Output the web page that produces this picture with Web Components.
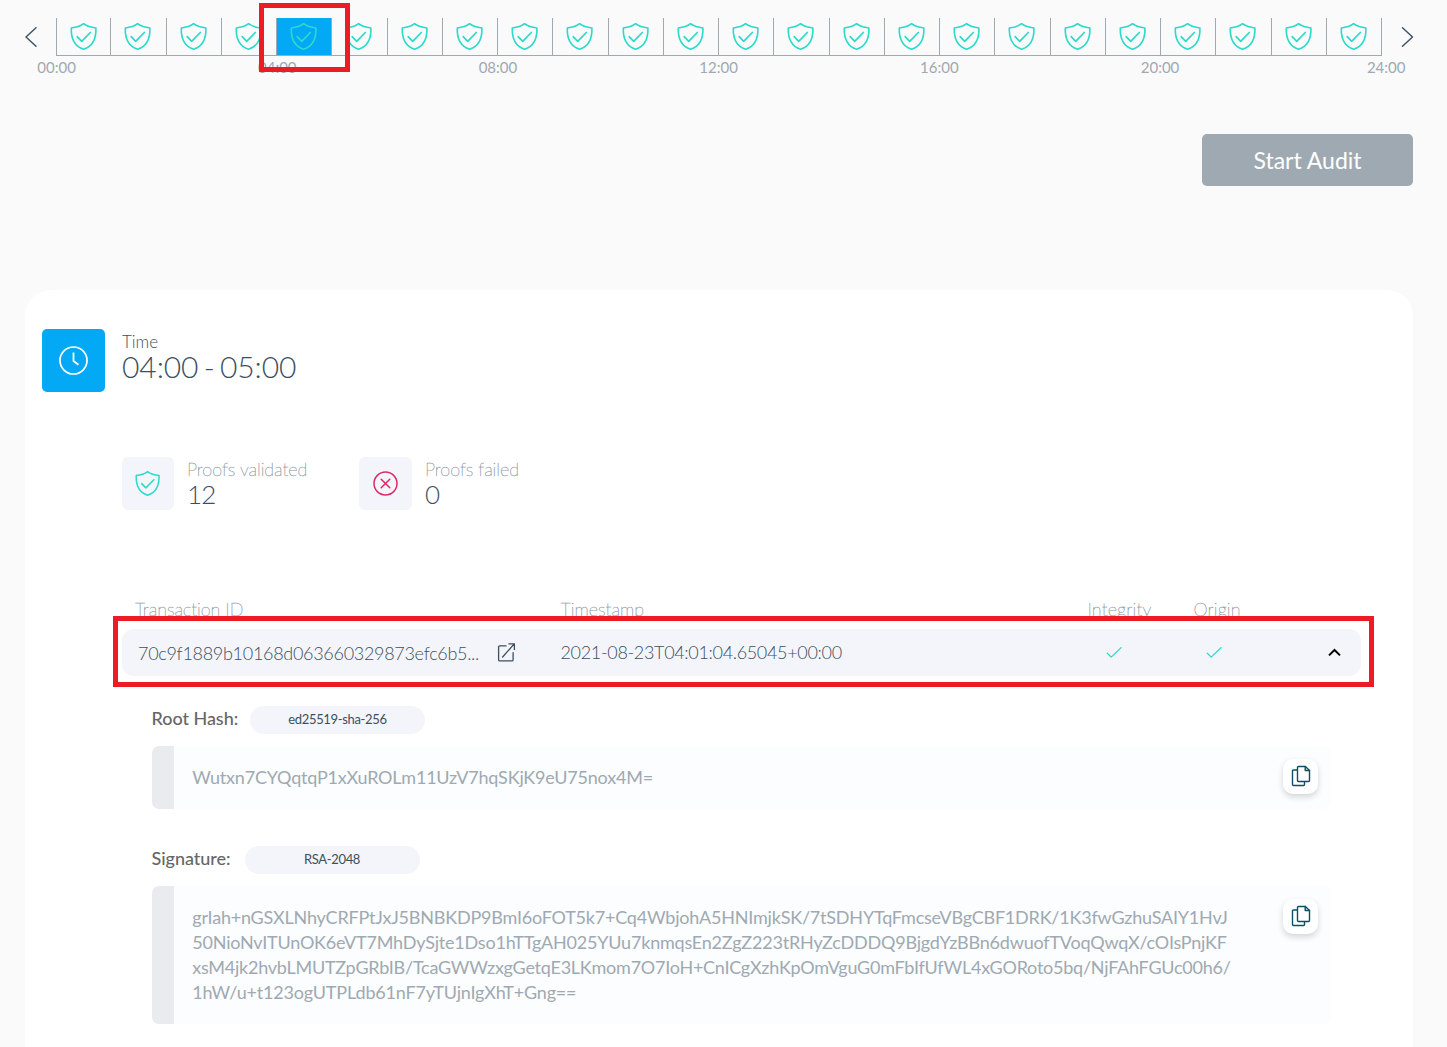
<!DOCTYPE html>
<html lang="en">
<head>
<meta charset="utf-8">
<title>Audit</title>
<style>
html,body{margin:0;height:100%;overflow:hidden}
body{background:#fafafa;font-family:Lato,"Liberation Sans",sans-serif;color:#3c4f5f}
</style>
</head>
<body>
<audit-page></audit-page>
<script>
const define=(name,html,setup)=>customElements.define(name,class extends HTMLElement{
  constructor(){super();this.attachShadow({mode:'open'});}
  connectedCallback(){
    const t=document.createElement('template');
    t.innerHTML=typeof html==='function'?html(this):html;
    this.shadowRoot.replaceChildren(t.content.cloneNode(true));
    if(setup)setup(this);
  }
});

const icons={
  shield:['0.4 -0.5 28 28','<path d="M14 1.2C10.6 3.8 6.4 5 1.7 5.5C1.3 15.5 4.8 23.8 14 26.7C23.2 23.8 26.7 15.5 26.3 5.5C21.6 5 17.4 3.8 14 1.2Z" stroke-width="1.6"/><path d="M7.6 14.2L12.1 18.8L20.7 10" stroke-width="1.7"/>'],
  clock:['-0.5 -0.5 30 30','<circle cx="15" cy="15" r="13.5" stroke-width="1.7"/><path d="M15 7V15.6L20 19.2" stroke-width="1.8" stroke-linecap="butt" stroke-linejoin="miter"/>'],
  fail:['0.5 -0.5 26 26','<circle cx="13" cy="13" r="11.5" stroke-width="1.5"/><path d="M8.7 8.7L17.3 17.3M17.3 8.7L8.7 17.3" stroke-width="1.5"/>'],
  prev:['0 0 14 22','<path d="M12 1.7L2 11L12 20.3" stroke-width="1.5"/>'],
  next:['0.5 0 14 22','<path d="M2 1.7L12 11L2 20.3" stroke-width="1.5"/>'],
  check:['-0.3 -0.6 16 12','<path d="M1 6.6L4.9 10.5L14.8 1" stroke-width="1.3"/>'],
  up:['0.5 0 14 9','<path d="M1.5 7.4L7 2L12.5 7.4" stroke-width="2" stroke-linecap="butt" stroke-linejoin="miter"/>'],
  link:['0.4 -0.4 18 20','<path d="M8.5 3.5H2.2Q1 3.5 1 4.7V17.3Q1 18.5 2.2 18.5H14.3Q15.5 18.5 15.5 17.3V10.2M5 14.6L16.6 1.5M11.3 1.4H16.8V7.2" stroke-width="1.3"/>'],
  copy:['0 0 20 22','<path d="M6.5 5H2.4Q1.5 5 1.5 5.9V19.6Q1.5 20.5 2.4 20.5H12.6Q13.5 20.5 13.5 19.6V17M14.4 1.5H7.4Q6.5 1.5 6.5 2.4V15.6Q6.5 16.5 7.4 16.5H17.6Q18.5 16.5 18.5 15.6V5.4Z" stroke-width="1.4"/><path d="M14.2 1.5V5.5H18.5" stroke-width="1.4"/>']
};
define('ui-icon',h=>{const i=icons[h.getAttribute('name')];return `<style>
:host{display:block;flex:none}svg{display:block;width:100%;height:100%;overflow:visible;fill:none;stroke:currentColor;stroke-linecap:round;stroke-linejoin:round}
</style><svg viewBox="${i[0]}">${i[1]}</svg>`});

define('hour-cell',`<style>
:host{display:flex;flex:none;width:55.25px;box-sizing:border-box;height:38px;justify-content:center;border-right:1px solid #9fa9b1;border-bottom:1px solid #9fa9b1;color:#2bdacb}
:host([selected]){background:#03a9f4}
:host(:first-child){border-left:1px solid #9fa9b1}
ui-icon{width:28px;height:28px;margin-top:4px}
</style><ui-icon name="shield"></ui-icon>`);

define('hour-timeline',`<style>
:host{display:block;height:80px;padding:18px 33px 0 24px}
.row{display:flex}
.cells{display:flex;width:1326px;margin:0 19px 0 18px;flex:none}
ui-icon{width:14px;height:22px;margin-top:8px;color:#3f5565}
.labels{display:flex;margin:1px 0 0 13.3px;font-size:15px;line-height:20px;color:#9fa9b1}
.labels span{width:220.7px;flex:none}.labels span:last-child{width:auto;margin-left:5.5px}
</style><div class="row"><ui-icon name="prev"></ui-icon><div class="cells"></div><ui-icon name="next"></ui-icon></div><div class="labels"></div>`,h=>{
  const c=h.shadowRoot.querySelector('.cells'),l=h.shadowRoot.querySelector('.labels');
  for(let i=0;i<24;i++){const e=document.createElement('hour-cell');if(i===4)e.setAttribute('selected','');c.append(e);}
  for(let i=0;i<=24;i+=4){const s=document.createElement('span');s.textContent=String(i).padStart(2,'0')+':00';l.append(s);}
});

define('audit-button',`<style>
:host{display:block}
button{display:block;width:211px;height:52px;border:0;border-radius:5px;background:#9fa9b1;color:#fff;font:400 23px/52px Lato,sans-serif;padding:0}
</style><button><slot></slot></button>`);

define('time-summary',`<style>
:host{display:flex;gap:17px;height:63px}
.tile{box-sizing:border-box;width:63px;height:63px;padding:16px;border-radius:5px;background:#03a9f4;color:#fff}
ui-icon{width:30px;height:30px}
.k{font-size:17px;font-weight:300;line-height:20px;margin-top:3px}
.v{font-size:30px;font-weight:300;line-height:28px;white-space:pre;word-spacing:-2.8px;letter-spacing:-.08px}
</style><div class="tile"><ui-icon name="clock"></ui-icon></div><div><div class="k">Time</div><div class="v"><slot></slot></div></div>`);

define('proof-stat',h=>`<style>
:host{display:flex;height:53px;gap:13px}
.tile{box-sizing:border-box;width:52px;height:53px;padding:13px 0 0 12.5px;border-radius:6px;background:#f4f5fa;color:${h.getAttribute('tone')}}
:host([icon="fail"]) .tile{width:53px;padding-left:13.5px}
ui-icon{width:26px;height:26px}
.k{font-size:18px;font-weight:200;line-height:24px;color:#8a98a4;-webkit-text-stroke:.35px #8a98a4;white-space:nowrap;letter-spacing:-.06px}
.v{font-size:26px;font-weight:300;line-height:30px;margin-top:-2px;letter-spacing:-.8px}
</style><div class="tile"><ui-icon name="${h.getAttribute('icon')}"></ui-icon></div><div><div class="k">${h.getAttribute('label')}</div><div class="v"><slot></slot></div></div>`);

define('tx-table',`<style>
:host{display:block;width:1239px}
.head,.row{display:flex;align-items:center;white-space:nowrap}
.head{height:24px;font-size:18px;font-weight:200;color:#8a98a4;-webkit-text-stroke:.35px #8a98a4;padding-left:13px}
.head span:nth-child(1){width:425.5px;letter-spacing:-.06px}.head span:nth-child(2){width:527px}.head span:nth-child(3){width:106px}
.head span:nth-child(n+3){letter-spacing:.12px}
.row{box-sizing:border-box;height:47px;margin-top:8px;border-radius:12px;background:#f4f5fa;font-size:18px;font-weight:300;padding:0 19.5px 0 16px}
.id{width:359.5px;letter-spacing:-.3px}.ts{width:545.5px;letter-spacing:-.33px;margin-top:-1px}
.link{width:18px;height:20px;margin:-1px 45px 0 0}
.ok{width:16px;height:12px;color:#2bdacb;margin:-1px 83.5px 0 0}
.up{width:14px;height:9px;color:#000;margin-left:auto}
</style><div class="head"><span>Transaction ID</span><span>Timestamp</span><span>Integrity</span><span>Origin</span></div>
<div class="row"><span class="id">70c9f1889b10168d063660329873efc6b5...</span><ui-icon class="link" name="link"></ui-icon><span class="ts">2021-08-23T04:01:04.65045+00:00</span><ui-icon class="ok" name="check"></ui-icon><ui-icon class="ok" name="check"></ui-icon><ui-icon class="up" name="up"></ui-icon></div>`);

define('copy-button',`<style>
:host{display:block;box-sizing:border-box;flex:none;width:35px;height:35px;padding:6px 0 0 7.5px;border-radius:10px;background:#fff;box-shadow:0 3px 6px rgba(0,0,0,.16);color:#0b4f66}
ui-icon{width:20px;height:22px}
</style><ui-icon name="copy"></ui-icon>`);

define('proof-field',h=>`<style>
:host{display:block;width:1179px}
.top{display:flex;height:28px}
.label{font-size:18px;font-weight:500;line-height:24px;color:#666;margin-left:-.5px;letter-spacing:-.04px;width:${h.getAttribute('label-width')}px;white-space:nowrap}
.pill{width:175px;height:28px;border-radius:14px;background:#f4f5fa;text-align:center;font-size:13px;line-height:27px;letter-spacing:-.33px}
.box{display:flex;box-sizing:border-box;margin-top:12px;border-left:22px solid #eaebef;border-radius:7px;background:#fbfdff;padding:19px 13px 19px 18.3px;justify-content:space-between}
.text{font-size:18px;line-height:25px;color:#9fa9b1;letter-spacing:-.212px}
::slotted(div){white-space:nowrap}
copy-button{margin:-6px 0}
</style><div class="top"><span class="label">${h.getAttribute('label')}</span><span class="pill">${h.getAttribute('algorithm')}</span></div>
<div class="box"><div class="text"><slot></slot></div><copy-button></copy-button></div>`);

define('highlight-frame',`<style>:host{display:block;position:absolute;box-sizing:border-box;border:5px solid #ed1c24;pointer-events:none}</style>`);

define('audit-page',`<style>
:host{display:block;position:relative;width:1447px;height:1047px;overflow:hidden}
hour-timeline{box-sizing:border-box}
.actions{display:flex;justify-content:flex-end;padding:54px 34px 0 0}
.card{box-sizing:border-box;width:1388px;height:800px;margin:104px 0 0 25px;border-radius:26px;background:#fff;padding:39px 0 0 17px}
.stats{display:flex;margin:65px 0 0 80px}
.stats proof-stat:first-child{width:237px}
tx-table{margin:87px 0 0 80px}
proof-field{margin:30px 0 0 110px}
proof-field+proof-field{margin-top:37px}
.l2{letter-spacing:-.2px}.l3{letter-spacing:-.241px}.l4{letter-spacing:-.18px}
.f1{left:259px;top:3px;width:91px;height:69px}
.f2{left:113px;top:616px;width:1261px;height:71px}
</style>
<hour-timeline></hour-timeline>
<div class="actions"><audit-button>Start Audit</audit-button></div>
<div class="card">
<time-summary>04:00 - 05:00</time-summary>
<div class="stats"><proof-stat icon="shield" tone="#2bdacb" label="Proofs validated">12</proof-stat><proof-stat icon="fail" tone="#dc2a68" label="Proofs failed">0</proof-stat></div>
<tx-table></tx-table>
<proof-field label="Root Hash:" label-width="98.5" algorithm="ed25519-sha-256"><div>Wutxn7CYQqtqP1xXuROLm11UzV7hqSKjK9eU75nox4M=</div></proof-field>
<proof-field label="Signature:" label-width="93" algorithm="RSA-2048"><div>grIah+nGSXLNhyCRFPtJxJ5BNBKDP9BmI6oFOT5k7+Cq4WbjohA5HNImjkSK/7tSDHYTqFmcseVBgCBF1DRK/1K3fwGzhuSAIY1HvJ</div>
<div class="l2">50NioNvITUnOK6eVT7MhDySjte1Dso1hTTgAH025YUu7knmqsEn2ZgZ223tRHyZcDDDQ9BjgdYzBBn6dwuofTVoqQwqX/cOIsPnjKF</div>
<div class="l3">xsM4jk2hvbLMUTZpGRbIB/TcaGWWzxgGetqE3LKmom7O7IoH+CnICgXzhKpOmVguG0mFbIfUfWL4xGORoto5bq/NjFAhFGUc00h6/</div>
<div class="l4">1hW/u+t123ogUTPLdb61nF7yTUjnIgXhT+Gng==</div></proof-field>
</div>
<highlight-frame class="f1"></highlight-frame><highlight-frame class="f2"></highlight-frame>`);
</script>
</body>
</html>
